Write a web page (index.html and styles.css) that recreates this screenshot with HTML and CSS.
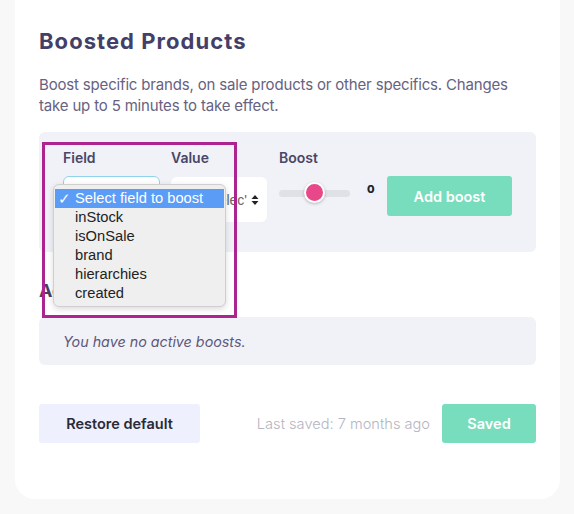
FILE: index.html
```html
<!DOCTYPE html>
<html>
<head>
<meta charset="utf-8">
<link rel="stylesheet" href="styles.css">
</head>
<body>
<div class="card">
  <h1 class="title">Boosted Products</h1>
  <p class="desc">Boost specific brands, on sale products or other specifics. Changes take up to 5 minutes to take effect.</p>

  <div class="panel form">
    <div class="col col-field">
      <div class="label">Field</div>
      <div class="select focus"></div>
    </div>
    <div class="col col-value">
      <div class="label">Value</div>
      <div class="select value"><span class="ph">Selec'</span><span class="arrows">
        <svg width="8" height="12" viewBox="0 0 8 12"><path d="M4 1 L7.5 5 H0.5 Z M4 11 L7.5 7 H0.5 Z" fill="#222"/></svg></span></div>
    </div>
    <div class="col col-boost">
      <div class="label">Boost</div>
      <div class="slider-row">
        <div class="track"><div class="thumb"></div></div>
        <span class="num">0</span>
      </div>
    </div>
    <div class="col col-btn">
      <button class="btn green add">Add boost</button>
    </div>
  </div>

  <h2 class="sub">Active boosts</h2>
  <div class="panel empty">You have no active boosts.</div>

  <div class="footer">
    <button class="btn restore">Restore default</button>
    <div class="spacer"></div>
    <span class="saved-at">Last saved: 7 months ago</span>
    <button class="btn green saved">Saved</button>
  </div>

  <div class="dropdown">
    <div class="opt sel"><span class="chk">✓</span>Select field to boost</div>
    <div class="opt">inStock</div>
    <div class="opt">isOnSale</div>
    <div class="opt">brand</div>
    <div class="opt">hierarchies</div>
    <div class="opt">created</div>
  </div>
  <div class="highlight"></div>
</div>
</body>
</html>
```

FILE: styles.css
```css
html, body {
  margin: 0;
  padding: 0;
  background: #f8f8f8;
}
body {
  width: 574px;
  height: 514px;
  overflow: hidden;
  font-family: Inter, "Noto Sans", sans-serif;
}
.card {
  position: relative;
  margin-left: 15px;
  width: 545px;
  height: 499px;
  box-sizing: border-box;
  background: #fff;
  border-radius: 0 0 20px 20px;
  padding: 28px 24px 0 24px;
}
.title {
  margin: 0;
  font-size: 22px;
  font-weight: 700;
  color: #443f68;
  letter-spacing: 1.05px;
  line-height: 27px;
}
.desc {
  margin: 20px 0 0 0;
  font-size: 15px;
  letter-spacing: -0.17px;
  line-height: 20.5px;
  color: #66627f;
  width: 480px;
}
.panel {
  background: #f1f2f8;
  border-radius: 6px;
  width: 497px;
  box-sizing: border-box;
}
.form {
  margin-top: 16px;
  height: 120px;
  display: flex;
  padding: 17px 24px 0 24px;
}
.col { display: flex; flex-direction: column; }
.col-field { width: 108px; }
.col-value { width: 108px; }
.col-boost { width: 108px; }
.label {
  font-size: 14px;
  font-weight: 600;
  color: #4a4667;
  line-height: 18px;
  height: 27px;
}
.select {
  height: 45px;
  box-sizing: border-box;
  background: #fff;
  border-radius: 6px;
}
.col-field .select { width: 97px; border: 1px solid #8ed3ea; }
.col-value .select {
  width: 96px;
  margin-top: 1px;
  display: flex;
  align-items: center;
  justify-content: flex-end;
  padding-right: 8px;
  gap: 4px;
  font-family: "Liberation Sans", sans-serif;
  font-size: 14px;
  color: #666;
}
.arrows { display: flex; align-items: center; }
.slider-row {
  display: flex;
  align-items: center;
  height: 34px;
}
.track {
  position: relative;
  width: 71px;
  height: 7px;
  border-radius: 4px;
  background: #dfe1e6;
}
.thumb {
  position: absolute;
  left: 25px;
  top: -8px;
  width: 17px;
  height: 17px;
  border-radius: 50%;
  background: #e8488a;
  border: 2.5px solid #fff;
  box-shadow: 0 1px 3px rgba(0,0,0,0.25);
}
.num {
  margin-left: 13px;
  margin-top: -9px;
  font-size: 11px;
  font-weight: 800;
  color: #222;
  background: #eef0fb;
  padding: 1px 4px;
}
.col-btn { padding-top: 27px; }
.btn {
  border: 0;
  border-radius: 3px;
  font-family: Inter, "Noto Sans", sans-serif;
  font-size: 14.5px;
  font-weight: 600;
  cursor: pointer;
}
.green { background: #77ddbd; color: #fff; }
.add { width: 125px; height: 40px; }
.sub {
  margin: 28px 0 0 0;
  font-size: 18px;
  font-weight: 700;
  color: #443f68;
  line-height: 22px;
}
.empty {
  margin-top: 15px;
  height: 48px;
  padding-left: 24px;
  display: flex;
  align-items: center;
  font-style: italic;
  font-size: 14.3px;
  color: #5c587a;
}
.footer {
  margin-top: 39px;
  display: flex;
  align-items: center;
  width: 497px;
}
.restore {
  width: 161px;
  height: 39px;
  background: #eef1fd;
  color: #2a2a38;
}
.spacer { flex: 1; }
.saved-at {
  font-size: 14.6px;
  font-weight: 300;
  color: #b5b5c2;
  margin-right: 12px;
}
.saved { width: 94px; height: 39px; }
.dropdown {
  position: absolute;
  left: 38px;
  top: 184px;
  width: 173px;
  height: 123px;
  box-sizing: border-box;
  background: #efefef;
  border: 1px solid #cfcfcf;
  border-radius: 6px;
  box-shadow: 0 2px 6px rgba(0,0,0,0.15);
  padding: 4px 1px 0 1px;
  font-family: "Liberation Sans", Arial, sans-serif;
  font-size: 14.7px;
  color: #222;
}
.opt {
  height: 19px;
  line-height: 19px;
  padding-left: 20px;
  position: relative;
}
.opt.sel {
  background: #5b9cf7;
  color: #fff;
}
.chk {
  position: absolute;
  left: 3px;
  top: 0;
  font-size: 15px;
}
.highlight {
  position: absolute;
  left: 27px;
  top: 142px;
  width: 195px;
  height: 176px;
  box-sizing: border-box;
  border: 3px solid #ad2490;
}
```
